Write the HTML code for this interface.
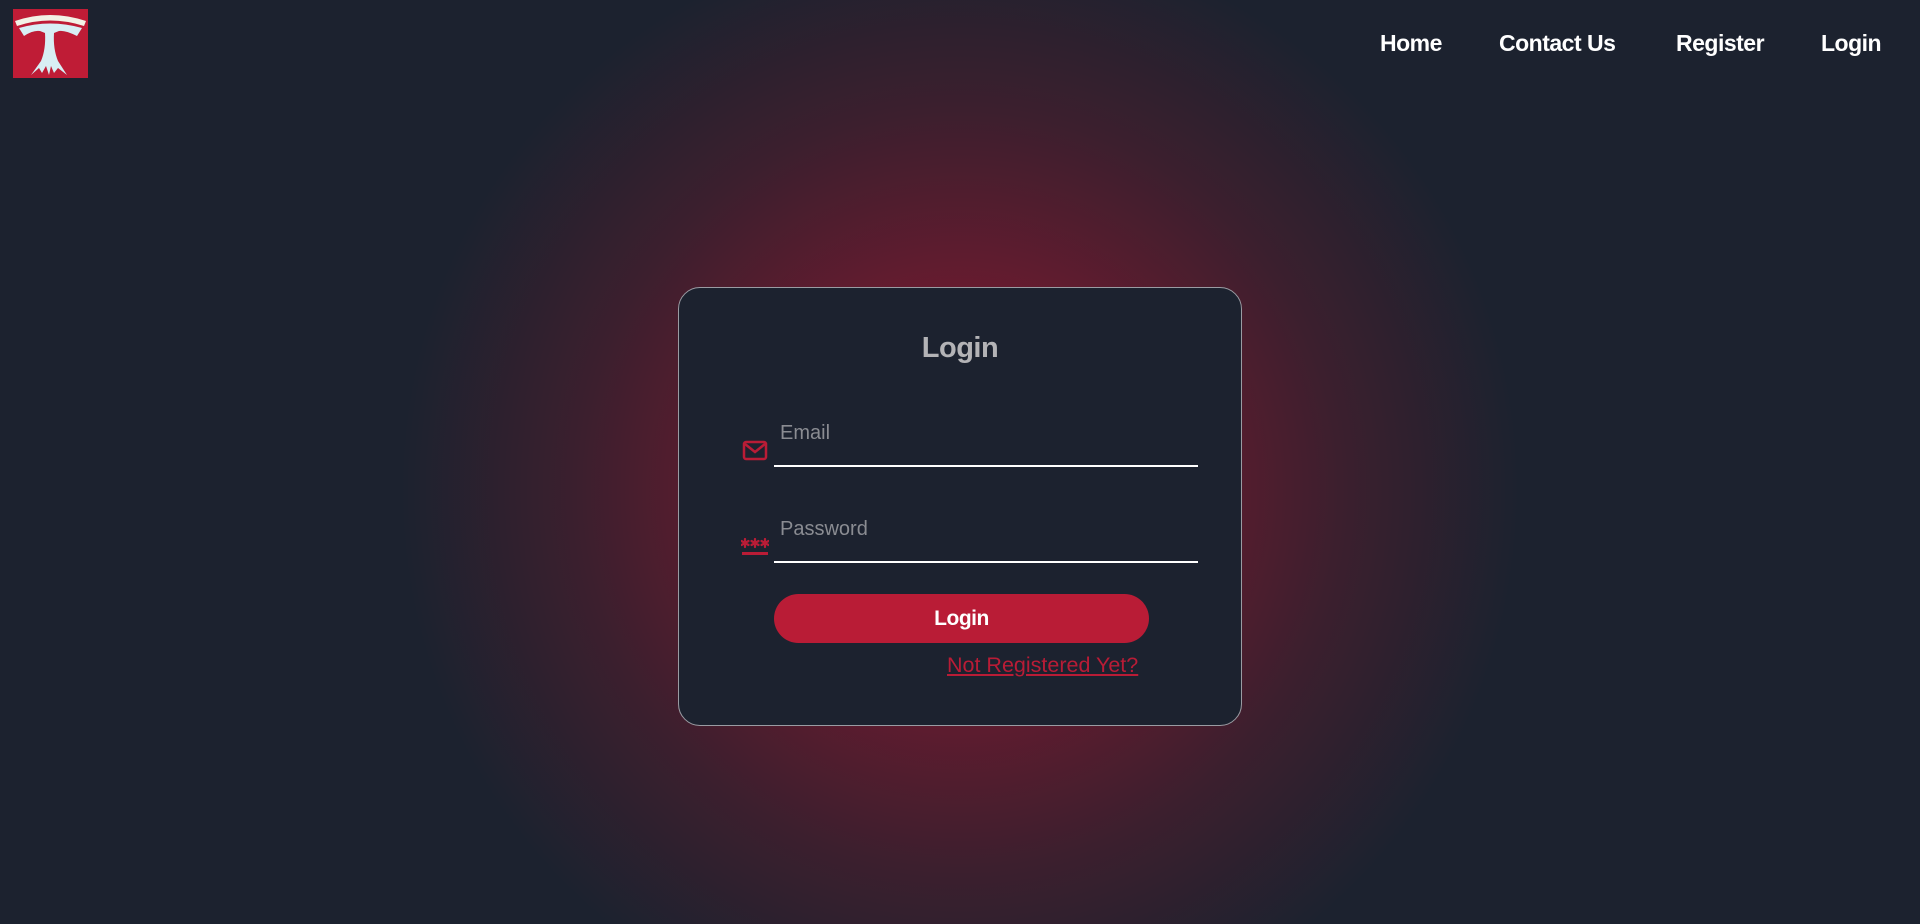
<!DOCTYPE html>
<html><head><meta charset="utf-8"><style>
html,body{margin:0;width:1920px;height:924px;overflow:hidden;background:#1c222f;font-family:"Liberation Sans",sans-serif}
body{background:radial-gradient(circle at 960px 490px,#7a1a30 0px,#661b2f 200px,#3c1f2e 380px,#1c222f 560px)}
.logo{position:absolute;left:13px;top:9px;width:75px;height:69px;background:#bf1c36}
nav a{position:absolute;top:30px;color:#fff;font-weight:bold;font-size:23px;text-decoration:none;letter-spacing:-0.5px}
.card{position:absolute;left:678px;top:287px;width:562px;height:437px;border:1.5px solid #9a9ca3;border-radius:22px;background:#1c222f}
.t{position:absolute;left:0;width:100%;top:44px;text-align:center;color:#b3b3b6;font-weight:bold;font-size:29px;letter-spacing:-0.5px}
.lab{position:absolute;left:101px;color:#8a8c92;font-size:20px}
.line{position:absolute;left:95px;width:424px;height:2px;background:#fff}
.btn{position:absolute;left:95px;top:306px;width:375px;height:49px;border-radius:25px;background:#b91c36;color:#fff;font-weight:bold;font-size:21px;text-align:center;line-height:49px;letter-spacing:-0.5px}
.lnk{position:absolute;left:268px;top:365px;color:#b91c36;font-size:21.5px;text-decoration:underline}
</style></head><body>
<div class="logo"><svg width="75" height="69" viewBox="0 0 75 69">
<path d="M2 12 Q37 0 73 12 L71 17 Q37 6 4 17Z" fill="#f2f2e6"/>
<path d="M6 19 Q37 10 69 19 L64 27 Q52 21 46 22 L41 24 Q40 40 45 52 L54 66 L45 59 L41 64 L38 57 L36 66 L33 57 L29 64 L26 59 L18 66 L28 52 Q33 40 32 24 L27 22 Q20 21 11 27Z" fill="#d8eef4"/>
</svg></div>
<nav><a style="left:1380px">Home</a><a style="left:1499px">Contact Us</a><a style="left:1676px">Register</a><a style="left:1821px">Login</a></nav>
<div class="card">
<div class="t">Login</div>
<svg style="position:absolute;left:63px;top:152px" width="26" height="22" viewBox="0 0 26 22"><rect x="2" y="2" width="22" height="17" rx="2" fill="none" stroke="#b91c36" stroke-width="2.5"/><path d="M3 4 L13 12 L23 4" fill="none" stroke="#b91c36" stroke-width="2.5"/></svg>
<div class="lab" style="top:134px">Email</div>
<div class="line" style="top:177px"></div>
<svg style="position:absolute;left:62px;top:250px" width="28" height="18" viewBox="0 0 28 18">
<g stroke="#b91c36" stroke-width="2.2" stroke-linecap="round">
<path d="M4 1v8M0.5 3l7 4M0.5 7l7-4"/><path d="M14 1v8M10.5 3l7 4M10.5 7l7-4"/><path d="M24 1v8M20.5 3l7 4M20.5 7l7-4"/></g>
<rect x="1" y="14" width="26" height="3" fill="#b91c36"/></svg>
<div class="lab" style="top:230px">Password</div>
<div class="line" style="top:273px"></div>
<div class="btn">Login</div>
<div class="lnk">Not Registered Yet?</div>
</div>
</body></html>
